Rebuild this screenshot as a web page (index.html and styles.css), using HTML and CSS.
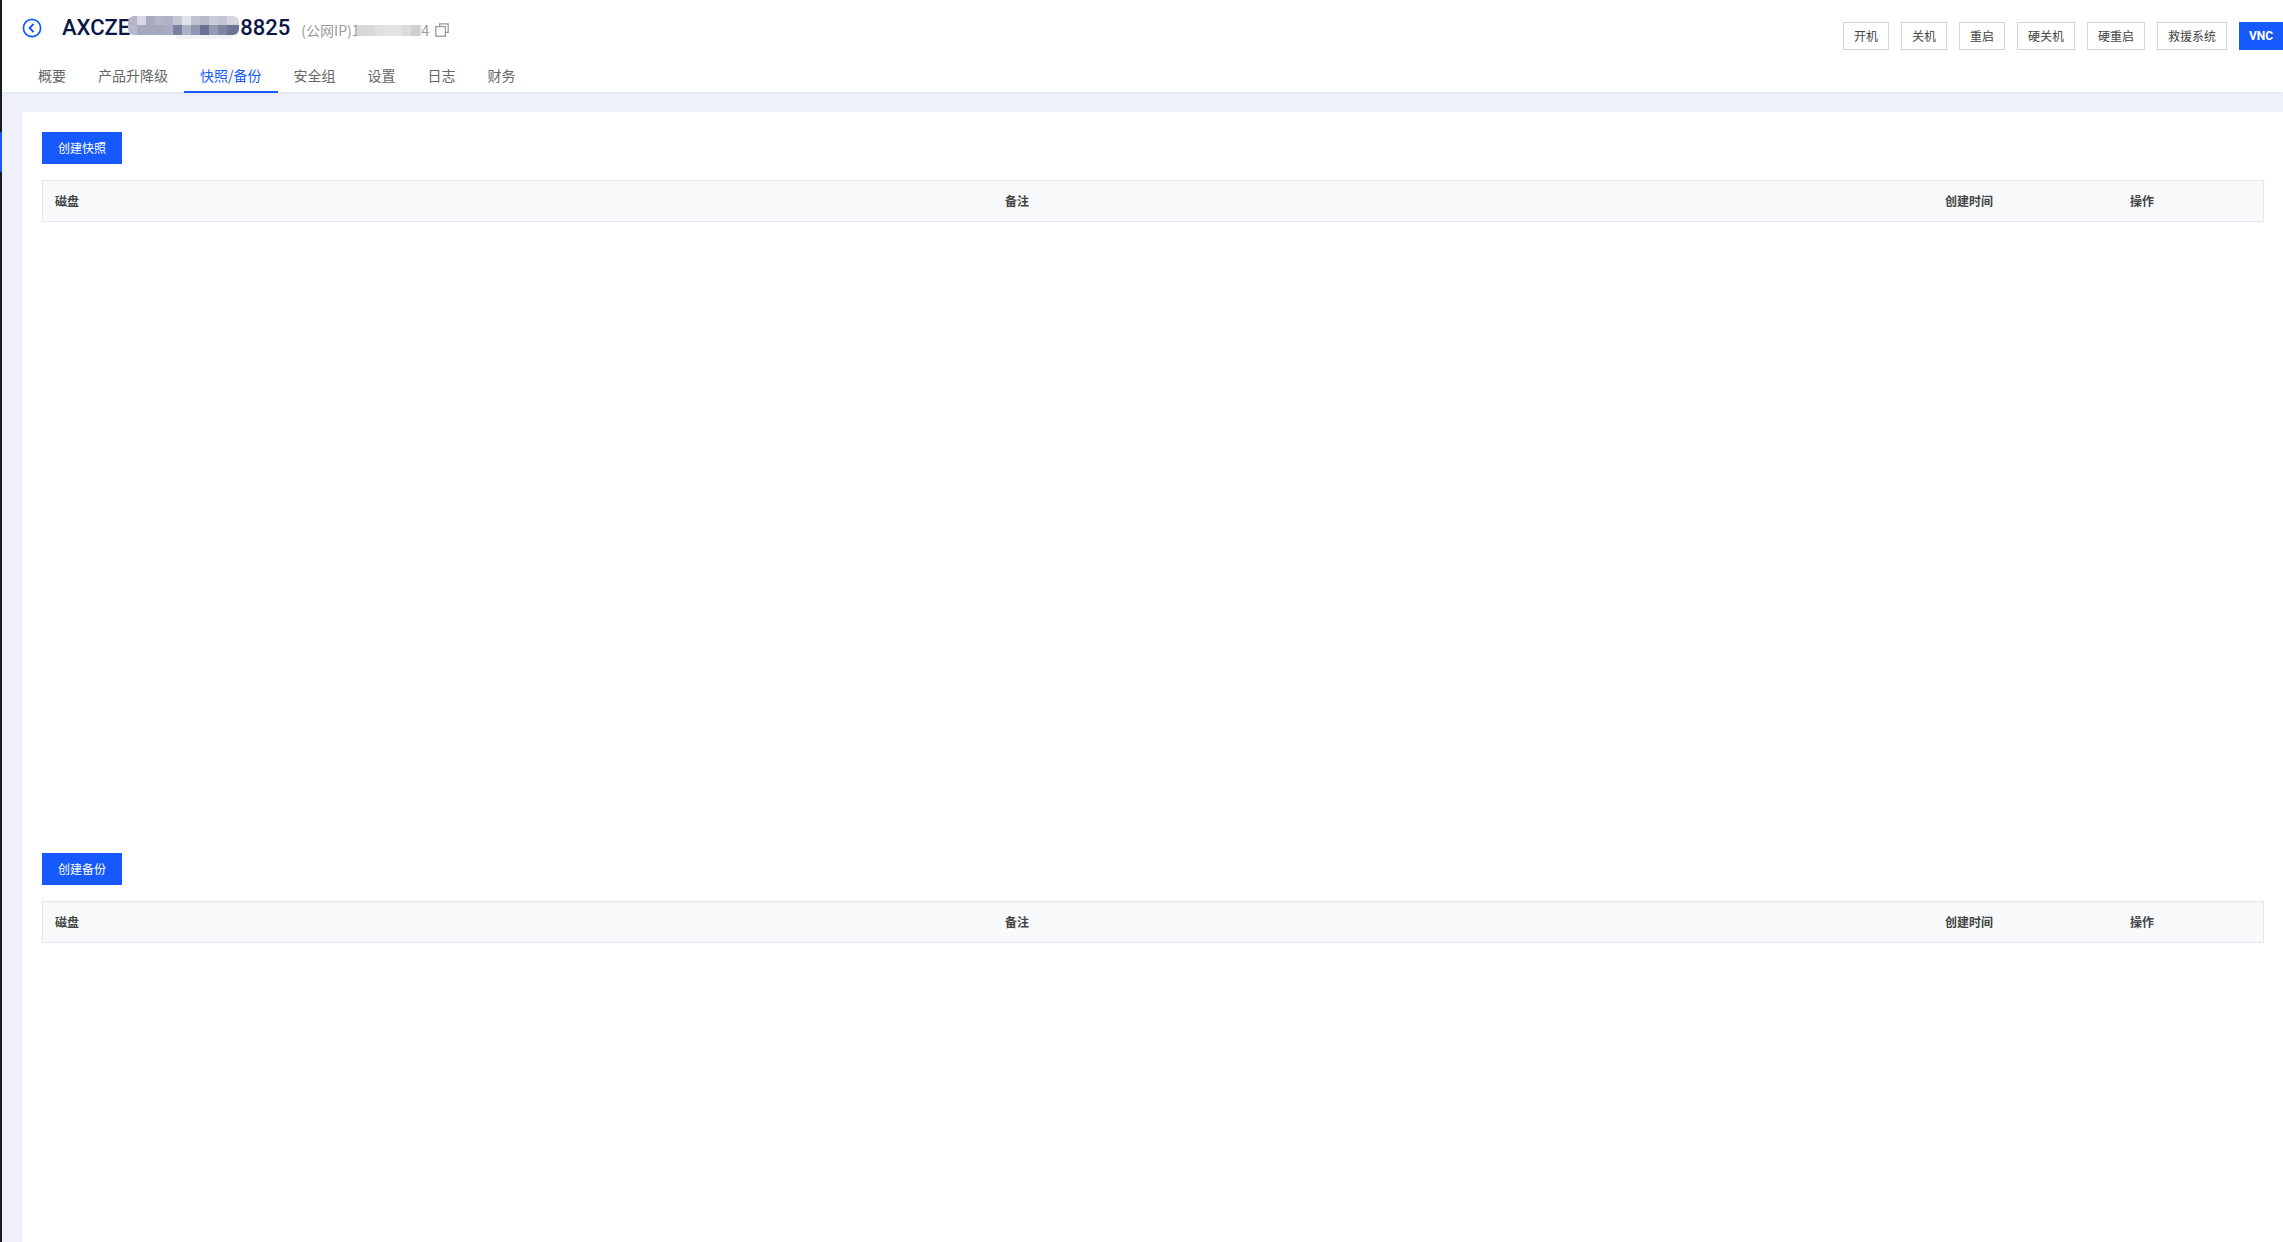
FILE: index.html
```html
<!DOCTYPE html>
<html lang="zh-CN">
<head>
<meta charset="utf-8">
<title>快照/备份</title>
<link rel="stylesheet" href="styles.css">
</head>
<body>
<div class="app">
  <aside class="rail"><span class="rail-mark"></span></aside>
  <main class="main">
    <header class="header">
      <div class="head-top">
        <div class="title-row">
          <a class="back" href="#" aria-label="返回">
            <svg viewBox="0 0 20 20" width="20" height="20"><circle cx="10" cy="10" r="8.6" fill="none" stroke="#1659ff" stroke-width="1.7"/><path d="M11.6 5.9 7.6 10l4 4.1" fill="none" stroke="#1659ff" stroke-width="2"/></svg>
          </a>
          <h1 class="title"><span>AXCZE50</span><span class="mosaic-title"></span><span>8825</span></h1>
          <span class="ip"><span>(公网IP)1</span><span class="mosaic-ip"></span><span>4</span></span>
          <svg class="copy" viewBox="0 0 14 14" width="14" height="14"><path d="M4.6 3.4V.8h8.6v8.6h-2.6" fill="none" stroke="#9a9a9a" stroke-width="1.3"/><rect x=".8" y="3.6" width="9.6" height="9.6" fill="none" stroke="#9a9a9a" stroke-width="1.3"/></svg>
        </div>
        <div class="actions">
          <button class="btn-line w46">开机</button>
          <button class="btn-line w46">关机</button>
          <button class="btn-line w46">重启</button>
          <button class="btn-line w58">硬关机</button>
          <button class="btn-line w58">硬重启</button>
          <button class="btn-line w70">救援系统</button>
          <button class="btn-vnc">VNC</button>
        </div>
      </div>
      <nav class="tabs">
        <a class="tab" href="#">概要</a>
        <a class="tab" href="#">产品升降级</a>
        <a class="tab active" href="#">快照/备份</a>
        <a class="tab" href="#">安全组</a>
        <a class="tab" href="#">设置</a>
        <a class="tab" href="#">日志</a>
        <a class="tab" href="#">财务</a>
      </nav>
    </header>
    <div class="content">
      <div class="panel">
        <section class="block">
          <button class="btn-primary">创建快照</button>
          <div class="thead"><span>磁盘</span><span>备注</span><span>创建时间</span><span>操作</span></div>
        </section>
        <section class="block">
          <button class="btn-primary">创建备份</button>
          <div class="thead"><span>磁盘</span><span>备注</span><span>创建时间</span><span>操作</span></div>
        </section>
      </div>
    </div>
  </main>
</div>
</body>
</html>
```

FILE: styles.css
```css
* { box-sizing: border-box; }
html, body { margin: 0; height: 100%; }
body {
  font-family: "Noto Sans CJK SC", "Noto Sans", sans-serif;
  background: #fff;
  overflow: hidden;
}
.app { display: flex; height: 1242px; overflow: hidden; }
.rail { width: 2px; flex: none; background: #1a1a1a; padding-top: 132px; }
.rail-mark { display: block; height: 40px; background: #1659ff; }
.main { flex: 1; min-width: 0; display: flex; flex-direction: column; background: #eff2fa; }

.header { height: 92px; flex: none; background: #fff; box-shadow: 0 2px 4px rgba(30, 50, 110, .06); position: relative; }
.head-top { height: 62px; display: flex; justify-content: space-between; align-items: flex-start; }
.title-row { display: flex; align-items: center; height: 56px; padding-left: 20px; }
.back { display: block; width: 20px; height: 20px; }
.back svg { display: block; }
.title {
  margin: 0 0 0 20px;
  display: flex;
  align-items: center;
  font: 500 22px/28px Roboto, sans-serif;
  color: #0d1645;
}
.mosaic-title {
  position: relative;
  width: 111px;
  height: 19px;
  flex: none;
  margin: 0 1px 6px -27px;
  border-radius: 6px;
  background-repeat: no-repeat;
  background-size: 100% 9px, 100% 10px;
  background-position: 0 0, 0 9px;
  background-image:
    linear-gradient(90deg,
      #b4b6c8 0 9px, #d8d9e2 9px 18px, #a8aabf 18px 27px, #b4b6c8 27px 36px, #b0b2c5 36px 45px,
      #c4c6d4 45px 54px, #e2e3ea 54px 63px, #c0c2d0 63px 72px, #b8bacc 72px 81px, #c8cad6 81px 90px, #c4c6d3 90px 99px, #d4d5df 99px 111px),
    linear-gradient(90deg,
      #b8bacb 0 9px, #a5a7bd 9px 36px, #a9abc0 36px 45px,
      #7d81a1 45px 54px, #aeb0c4 54px 63px, #9396b0 63px 72px, #6b6f93 72px 81px, #9598b1 81px 90px, #8084a3 90px 99px, #6f7396 99px 111px);
}
.mosaic-title::after {
  content: "";
  position: absolute;
  left: 48px;
  top: 19px;
  width: 56px;
  height: 4px;
  background: #f3f3f7;
}
.ip {
  display: flex;
  align-items: center;
  margin: 4px 0 0 11px;
  font-size: 14px;
  line-height: 20px;
  color: #9a9a9a;
}
.mosaic-ip {
  width: 65px;
  height: 11px;
  flex: none;
  margin: 1px 0 0 -3px;
  background: linear-gradient(90deg,
    #d8d8d8 0 18px, #e0e0e0 18px 27px, #e3e3e3 27px 45px, #dcdcdc 45px 54px, #cfcfcf 54px 63px, #e6e6e6 63px 65px);
}
.copy { margin: 4px 0 0 6px; flex: none; }

.actions { display: flex; gap: 12px; padding-top: 22px; }
.btn-line, .btn-vnc, .btn-primary { font-family: inherit; cursor: pointer; padding: 0; }
.btn-line {
  height: 28px;
  padding-bottom: 2px;
  background: #fff;
  border: 1px solid #d4d4d4;
  color: #444;
  font-size: 12px;
}
.w46 { width: 46px; }
.w58 { width: 58px; }
.w70 { width: 70px; }
.btn-vnc {
  width: 44px;
  height: 28px;
  border: 0;
  background: #1659ff;
  color: #fff;
  font: 700 12px Roboto, sans-serif;
}

.tabs { display: flex; height: 30px; padding-left: 20px; }
.tab {
  display: block;
  padding: 0 16px;
  height: 31px;
  line-height: 26px;
  font-size: 14px;
  color: #666;
  text-decoration: none;
  white-space: nowrap;
}
.tab.active { color: #1659ff; border-bottom: 2px solid #1659ff; }

.content { flex: 1; padding: 20px 0 0 20px; min-height: 0; }
.panel { background: #fff; height: 100%; padding: 20px 19px 0 20px; overflow: hidden; }
.block { height: 721px; }
.block + .block { height: auto; }
.btn-primary {
  display: block;
  width: 80px;
  height: 32px;
  padding-bottom: 2px;
  border: 0;
  background: #1659ff;
  color: #fff;
  font-size: 12px;
}
.thead {
  margin-top: 16px;
  height: 42px;
  padding: 0 0 2px 12px;
  display: grid;
  grid-template-columns: 950px 940px 185px 1fr;
  align-items: center;
  background: #f7f9fb;
  border: 1px solid #e3e7f1;
  font-size: 12px;
  font-weight: 700;
  color: #444;
}
```
